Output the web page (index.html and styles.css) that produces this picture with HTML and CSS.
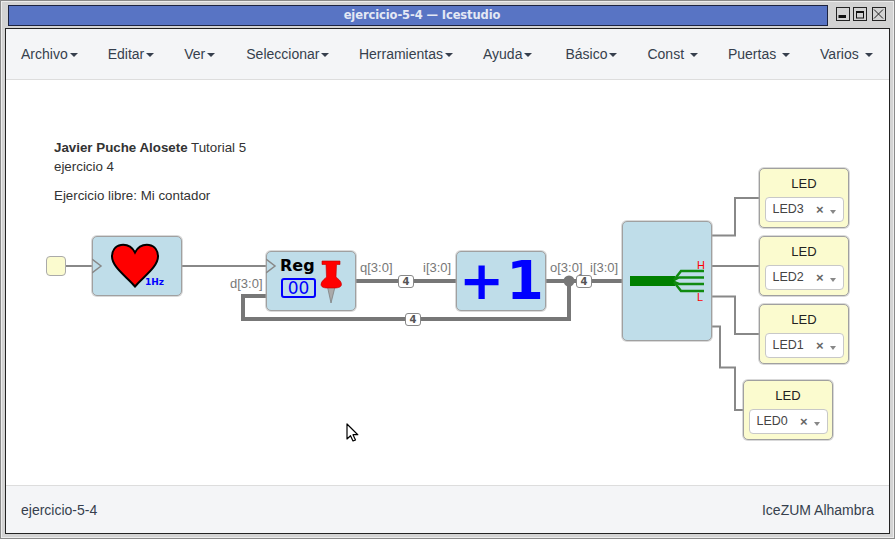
FILE: index.html
```html
<!DOCTYPE html>
<html lang="es">
<head>
<meta charset="utf-8">
<title>ejercicio-5-4 — Icestudio</title>
<link rel="stylesheet" href="styles.css">
</head>
<body>
<div class="frame">
  <header class="titlerow">
    <div class="titlebar">ejercicio-5-4 — Icestudio</div>
    <div class="winbtns">
      <span class="winbtn"><svg viewBox="0 0 12 12" class="winico"><rect x="1.500" y="7" width="7.500" height="3" fill="#111"/></svg></span>
      <span class="winbtn"><svg viewBox="0 0 12 12" class="winico"><rect x="2.500" y="3.500" width="7" height="6.500" fill="none" stroke="#111" stroke-width="1"/><rect x="2" y="3" width="8" height="2" fill="#111"/></svg></span>
      <span class="winbtn winbtn-close"><svg viewBox="0 0 12 12" class="winico"><path d="M1 1.500L10 10.500M10 1.500L1 10.500" stroke="#222" stroke-width="1" fill="none"/></svg></span>
    </div>
  </header>
  <main class="app">
    <nav class="menubar">
      <a class="menu m-archivo">Archivo<i class="caret"></i></a>
      <a class="menu m-editar">Editar<i class="caret"></i></a>
      <a class="menu m-ver">Ver<i class="caret"></i></a>
      <a class="menu m-sel">Seleccionar<i class="caret"></i></a>
      <a class="menu m-her">Herramientas<i class="caret"></i></a>
      <a class="menu m-ayu">Ayuda<i class="caret"></i></a>
      <a class="menu m-bas">Básico<i class="caret"></i></a>
      <a class="menu m-con">Const <i class="caret"></i></a>
      <a class="menu m-pue">Puertas <i class="caret"></i></a>
      <a class="menu m-var">Varios <i class="caret"></i></a>
    </nav>
    <section class="canvas">
      <svg class="wires" viewBox="6 80 883 405" width="883" height="405">
        <g fill="none" stroke="#888" stroke-width="2">
          <path d="M65 266H92"/>
          <path d="M182 266H266"/>
          <path d="M712 235.500H735V198H759"/>
          <path d="M712 266H759"/>
          <path d="M712 296.500H735V334H759"/>
          <path d="M712 326.500H720V367.500H735V410H743"/>
        </g>
        <g fill="none" stroke="#777" stroke-width="4">
          <path d="M356 281H622"/>
          <path d="M569 281V319H243V296H266"/>
        </g>
        <circle cx="569" cy="281" r="5.500" fill="#777"/>
      </svg>

      <div class="note">
        <p><b>Javier Puche Alosete</b> Tutorial 5<br>ejercicio 4</p>
        <p>Ejercicio libre: Mi contador</p>
      </div>

      <div class="input"></div>

      <div class="block b-clk">
        <svg class="art" viewBox="92 236 90 60" width="90" height="60">
          <path d="M92 259L101 266L92 273" fill="none" stroke="#888" stroke-width="1.500"/>
          <path d="M135 252.500C131 245 125 244.500 121 245C115 246 112 251 112 256.500C112 267 127 277 135 286.500C143 277 158 267 158 256.500C158 251 155 246 149 245C145 244.500 139 245 135 252.500Z" fill="#f00" stroke="#000" stroke-width="2"/>
        </svg>
        <span class="hz">1Hz</span>
      </div>

      <div class="block b-reg">
        <svg class="art" viewBox="266 251 90 60" width="90" height="60">
          <path d="M266 259L275 266L266 273" fill="none" stroke="#888" stroke-width="1.500"/>
          <path d="M327.500 287L331 303L335 287Z" fill="#aaa" stroke="#777" stroke-width=".7"/>
          <path d="M322 261H340V264.500H336.500L336 277C338 279 341.500 281 341.500 284.500C341.500 287 338 288 335 288H327C324 288 321 287 321 284.500C321 281 325 279 326.500 277L326 264.500H322Z" fill="#f00" stroke="#b00" stroke-width=".6"/>
        </svg>
        <span class="regname">Reg</span>
        <span class="regval">00</span>
      </div>

      <div class="block b-inc"><span class="inc">+1</span></div>

      <div class="block b-split">
        <svg class="art" viewBox="622 221 90 120" width="90" height="120">
          <rect x="630" y="276" width="45" height="10" fill="#008000"/>
          <g fill="none" stroke="#108a10" stroke-width="2.500">
            <path d="M674 280L681 271H704"/>
            <path d="M674 280L679 277.500H704"/>
            <path d="M674 282L679 284H704"/>
            <path d="M674 282L681 291H704"/>
          </g>
        </svg>
        <span class="pin-h">H</span>
        <span class="pin-l">L</span>
      </div>

      <span class="port p-q">q[3:0]</span>
      <span class="port p-i1">i[3:0]</span>
      <span class="port p-d">d[3:0]</span>
      <span class="port p-o">o[3:0]</span>
      <span class="port p-i2">i[3:0]</span>

      <span class="badge bd-1">4</span>
      <span class="badge bd-2">4</span>
      <span class="badge bd-3">4</span>

      <div class="led led-3"><div class="led-title">LED</div><div class="select"><span class="sel-v">LED3</span><span class="sel-x">×</span><i class="sel-c"></i></div></div>
      <div class="led led-2"><div class="led-title">LED</div><div class="select"><span class="sel-v">LED2</span><span class="sel-x">×</span><i class="sel-c"></i></div></div>
      <div class="led led-1"><div class="led-title">LED</div><div class="select"><span class="sel-v">LED1</span><span class="sel-x">×</span><i class="sel-c"></i></div></div>
      <div class="led led-0"><div class="led-title">LED</div><div class="select"><span class="sel-v">LED0</span><span class="sel-x">×</span><i class="sel-c"></i></div></div>

      <svg class="pointer" viewBox="0 0 14 20" width="14" height="20"><path d="M1 1V16L4.500 12.700L7 18L9.500 17L7 11.700H11.800Z" fill="#fff" stroke="#000" stroke-width="1.200" stroke-linejoin="round"/></svg>
    </section>
    <footer class="statusbar">
      <span>ejercicio-5-4</span>
      <span>IceZUM Alhambra</span>
    </footer>
  </main>
</div>
</body>
</html>
```
FILE: styles.css
```css
* { box-sizing: border-box; }
html, body { margin: 0; padding: 0; }
body { background: #d3d3d3; font-family: "Liberation Sans", Arial, sans-serif; color: #333; }

.frame {
  width: 895px; height: 539px; overflow: hidden;
  display: flex; flex-direction: column;
  border: 1px solid #8a8a8a;
  box-shadow: inset 0 0 0 1px #ececec;
  padding: 4px;
}

.titlerow { display: flex; height: 21px; margin-bottom: 2px; padding-left: 3px; }
.titlebar {
  width: 820px; height: 21px;
  background: #5874c4; border: 1px solid #1c2340;
  color: #e4e8f4; font: bold 11.500px "DejaVu Sans", sans-serif;
  letter-spacing: -.1px;
  line-height: 19px; text-align: center; padding-left: 8px;
}
.winbtns { display: flex; gap: 3px; margin-left: 8px; padding-top: 2px; }
.winbtn { width: 14px; height: 14px; border: 1px solid #222; display: flex; background: #d3d3d3; }
.winbtn-close { margin-left: 2px; }
.winico { width: 12px; height: 12px; }

.app {
  flex: 1; display: flex; flex-direction: column;
  border: 1px solid #222; background: #fff;
  width: 885px;
}

.menubar {
  height: 51px; flex: none; display: flex; align-items: center;
  background: #f4f5f7; border-bottom: 1px solid #ddd;
  font-size: 14px; color: #363f4d;
  padding-left: 15px;
}
.menu { display: block; white-space: pre; margin-right: 30px; }
.m-ver { margin-right: 31px; }
.m-sel { margin-right: 29.500px; }
.m-ayu { margin-right: 33px; }
.m-var { margin-right: 0; }
.caret {
  display: inline-block; width: 0; height: 0; margin-left: 2px;
  vertical-align: middle;
  border-top: 4px solid #363f4d; border-left: 4px solid transparent; border-right: 4px solid transparent;
}

.canvas { position: relative; flex: 1; background: #fff; overflow: hidden; }
.wires { position: absolute; left: 0; top: 0; }

.note { position: absolute; left: 48px; top: 59px; font-size: 13.330px; line-height: 18.500px; color: #333; }
.note p { margin: 0 0 11px; }

.input {
  position: absolute; left: 40px; top: 176px; width: 20px; height: 20px;
  background: #fbfbcf; border: 1.500px solid #aaa; border-radius: 4px;
}

.block {
  position: absolute; background: #bfdde9;
  border: 1px solid #a0a0a0; border-radius: 5px;
  box-shadow: 0 0 0 1px rgba(170, 170, 170, .45);
}
.art { position: absolute; left: -1px; top: -1px; }
.b-clk { left: 86px; top: 156px; width: 90px; height: 60px; }
.b-reg { left: 260px; top: 171px; width: 90px; height: 60px; }
.b-inc { left: 450px; top: 171px; width: 90px; height: 60px; display: flex; justify-content: center; align-items: center; }
.b-split { left: 616px; top: 141px; width: 90px; height: 120px; }

.hz { position: absolute; left: 52px; top: 40px; font: bold 9px "DejaVu Sans", sans-serif; color: #00f; }
.regname { position: absolute; left: 13px; top: 4px; font: bold 16px "DejaVu Sans", sans-serif; color: #000; }
.regval {
  position: absolute; left: 14px; top: 26px; width: 35px; height: 20px;
  border: 2px solid #00f; border-radius: 3px; background: #bfdde9;
  color: #00f; font: 17px/16px "DejaVu Sans", sans-serif; text-align: center;
}
.inc { font: bold 54px/60px "DejaVu Sans", sans-serif; color: #00f; letter-spacing: 2px; padding-left: 3px; white-space: nowrap; }
.pin-h, .pin-l { position: absolute; left: 74px; font-size: 11px; line-height: 11px; color: #f00; }
.pin-h { top: 38px; }
.pin-l { top: 70px; }

.port { position: absolute; font-size: 13px; line-height: 14px; color: #777; white-space: nowrap; }
.p-q { left: 354px; top: 181px; }
.p-i1 { left: 417px; top: 181px; }
.p-d { left: 224px; top: 197px; }
.p-o { left: 544px; top: 181px; }
.p-i2 { left: 584px; top: 181px; }

.badge {
  position: absolute; width: 16px; height: 13px;
  background: #fff; border: 1px solid #888; border-radius: 3px;
  font: bold 10px/11px "DejaVu Sans", sans-serif; color: #555; text-align: center;
}
.bd-1 { left: 392px; top: 195px; }
.bd-2 { left: 399px; top: 233px; }
.bd-3 { left: 570px; top: 195px; }

.led {
  position: absolute; width: 90px; height: 60px;
  background: #fbfbcf; border: 1px solid #a0a0a0; border-radius: 5px;
  box-shadow: 0 0 0 1px rgba(170, 170, 170, .45);
  display: flex; flex-direction: column; align-items: center;
}
.led-3 { left: 753px; top: 88px; }
.led-2 { left: 753px; top: 156px; }
.led-1 { left: 753px; top: 224px; }
.led-0 { left: 737px; top: 300px; }
.led-title { font-size: 13px; line-height: 15px; margin-top: 7px; color: #222; }
.select {
  width: 79px; height: 25px; margin-top: 6px;
  display: flex; align-items: center;
  background: #fff; border: 1px solid #c8c8c8; border-radius: 4px;
  padding-left: 7px; font-size: 12.500px; color: #444;
}
.sel-v { width: 43.500px; margin-top: -2px; }
.sel-x { font-size: 13px; font-weight: bold; color: #666; width: 14px; }
.sel-c {
  display: block; width: 0; height: 0; margin-top: 4px;
  border-top: 4px solid #888; border-left: 3.500px solid transparent; border-right: 3.500px solid transparent;
}

.pointer { position: absolute; left: 339.500px; top: 343px; }

.statusbar {
  height: 48px; flex: none; display: flex; justify-content: space-between; align-items: center;
  background: #f4f5f7; border-top: 1px solid #ddd;
  font-size: 14px; color: #363f4d;
  padding: 0 15px;
}
```
